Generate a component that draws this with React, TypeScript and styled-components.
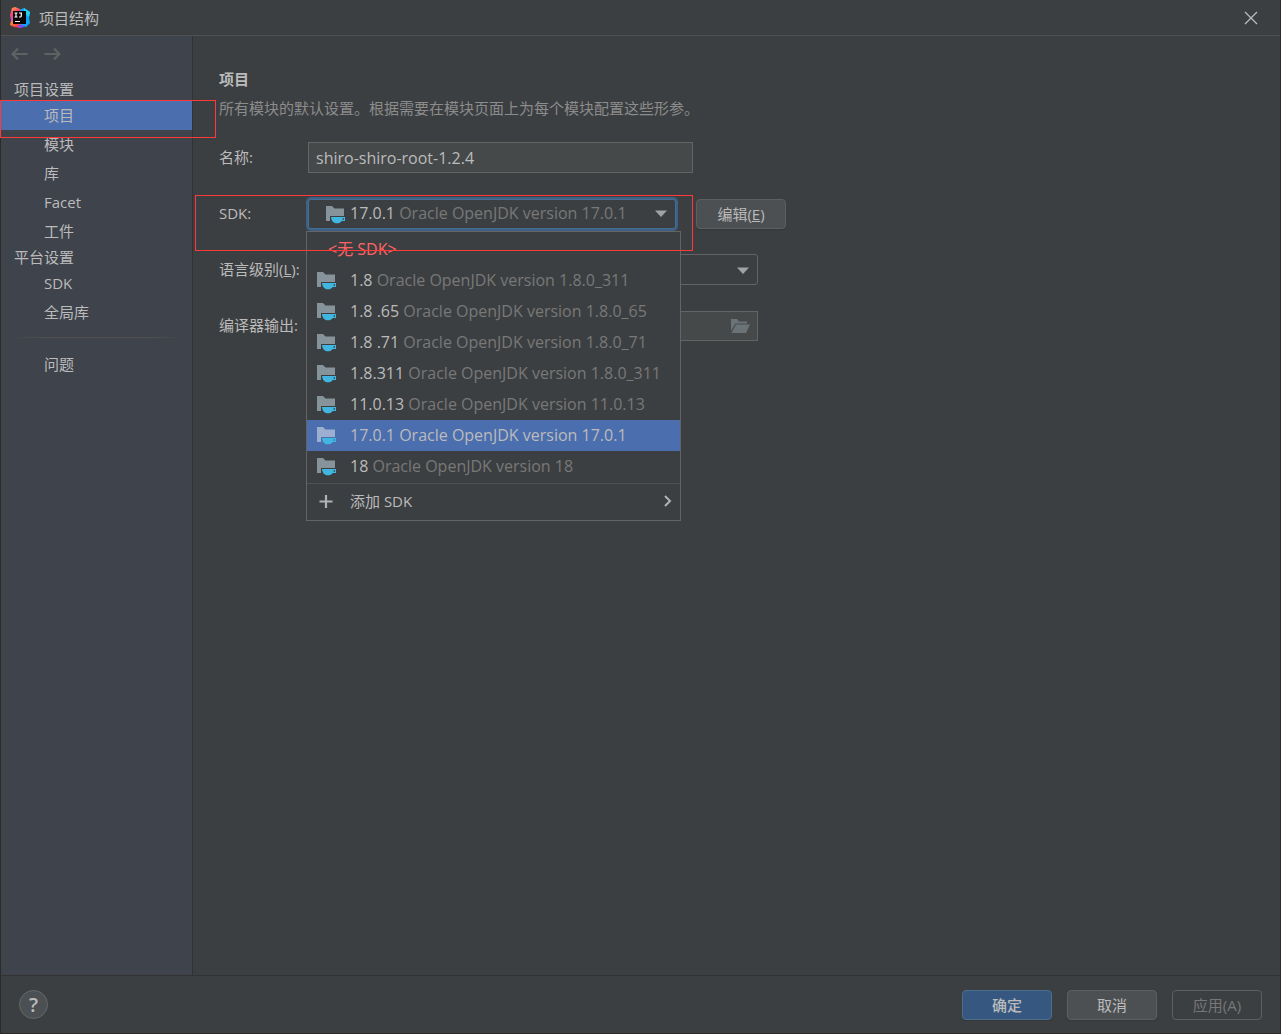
import React, { useState } from "react";
import styled, { createGlobalStyle, css } from "styled-components";

const c = {
  bg: "#3c3f41",
  sidebar: "#3e434c",
  text: "#bbbbbb",
  muted: "#787878",
  hint: "#8c8c8c",
  select: "#4b6eaf",
  field: "#45494a",
  border: "#646464",
  line: "#515151",
  edge: "#323232",
  mark: "#ff3838",
};

const GlobalStyle = createGlobalStyle`
  * { box-sizing: border-box; }
  body { margin: 0; background: ${c.bg}; }
  body, button, input, select {
    font-family: "Open Sans", "Noto Sans CJK SC", sans-serif;
    font-size: 15px;
    line-height: 20px;
    color: ${c.text};
  }
`;

const Window = styled.div`
  display: flex;
  flex-direction: column;
  min-height: 100vh;
  border: solid #2b2b2b;
  border-width: 0 1px 1px;
  background: ${c.bg};
`;

const TitleBar = styled.header`
  display: flex;
  align-items: center;
  gap: 8px;
  height: 36px;
  padding: 0 22px 0 8px;
  border-bottom: 1px solid ${c.line};
`;

const WindowTitle = styled.h1`
  flex: 1;
  margin: 0;
  font-size: 15px;
  font-weight: 400;
`;

const IconButton = styled.button`
  display: flex;
  padding: 0;
  border: 0;
  background: none;
  color: ${c.text};
`;

const Body = styled.div`
  display: flex;
  flex: 1;
`;

const Sidebar = styled.nav`
  width: 192px;
  flex-shrink: 0;
  background: ${c.sidebar};
  border-right: 1px solid ${c.edge};
`;

const History = styled.div`
  display: flex;
  align-items: center;
  gap: 15px;
  height: 36px;
  margin-bottom: 6px;
  padding-left: 9px;
  ${IconButton} { color: #5f6163; }
`;

const GroupTitle = styled.h2`
  margin: 0;
  padding-left: 13px;
  font-size: 15px;
  font-weight: 400;
  line-height: 23px;
`;

const NavList = styled.ul`
  margin: 0;
  padding: 0;
  list-style: none;
`;

const NavItem = styled.li`
  position: relative;
`;

const NavLink = styled.a<{ $active?: boolean }>`
  display: block;
  padding-left: 43px;
  line-height: 29px;
  color: ${c.text};
  text-decoration: none;
  background: ${(p) => (p.$active ? c.select : "transparent")};
`;

const Divider = styled.hr`
  height: 1px;
  margin: 10px 10px 12px;
  border: 0;
  background: linear-gradient(90deg, transparent, ${c.line} 20%, ${c.line} 80%, transparent);
`;

const Mark = styled.span<{ $area: "nav" | "sdk" }>`
  position: absolute;
  z-index: 3;
  border: 1px solid ${c.mark};
  pointer-events: none;
  ${(p) =>
    p.$area === "nav"
      ? css`top: -1px; left: -1px; width: 216px; height: 38px;`
      : css`top: -3px; left: -24px; width: 498px; height: 56px;`}
`;

const Main = styled.main`
  flex: 1;
  padding: 33px 26px;
`;

const PageTitle = styled.h2`
  margin: 0 0 9px;
  font-size: 15px;
  font-weight: 700;
  line-height: 20px;
`;

const Description = styled.p`
  margin: 0 0 24px;
  color: ${c.hint};
`;

const Form = styled.form`
  display: grid;
  gap: 25px;
`;

const Row = styled.div`
  position: relative;
  display: grid;
  grid-template-columns: 89px auto auto;
  justify-content: start;
  align-items: center;
  height: 31px;
`;

const Label = styled.label`
  padding-bottom: 2px;
  white-space: nowrap;
`;

const TextField = styled.input`
  width: 385px;
  height: 31px;
  padding: 0 7px;
  border: 1px solid ${c.border};
  background: ${c.field};
  font-size: 16px;
  outline: 0;
`;

const SelectFrame = styled.div`
  display: flex;
  align-items: center;
  width: 450px;
  height: 31px;
  border: 1px solid ${c.border};
  border-radius: 3px;
  svg { margin: 1px 8px 0 -20px; pointer-events: none; }
`;

const Select = styled.select`
  flex: 1;
  height: 29px;
  padding: 0 28px 0 7px;
  appearance: none;
  border: 0;
  background: none;
  outline: 0;
`;

const PathFrame = styled.div`
  display: flex;
  align-items: center;
  width: 450px;
  height: 30px;
  padding-right: 7px;
  border: 1px solid ${c.border};
  background: ${c.field};
`;

const PathField = styled.input`
  flex: 1;
  min-width: 0;
  padding: 0 7px;
  border: 0;
  background: none;
  outline: 0;
`;

const ComboWrap = styled.div`
  position: relative;
  width: 368px;
`;

const Combo = styled.button`
  display: flex;
  align-items: center;
  gap: 4px;
  width: 100%;
  height: 30px;
  padding: 0 8px 0 17px;
  border: 1px solid #466d94;
  border-radius: 3px;
  background: ${c.bg};
  box-shadow: 0 0 0 2px #3d6185;
  font-size: 16px;
  outline: 0;
`;

const ComboText = styled.span`
  flex: 1;
  padding-bottom: 2px;
  text-align: left;
  white-space: nowrap;
`;

const Version = styled.span<{ $muted: boolean }>`
  color: ${(p) => (p.$muted ? c.muted : "inherit")};
`;

const Popup = styled.div`
  position: absolute;
  z-index: 2;
  top: 32px;
  left: -2px;
  width: 375px;
  border: 1px solid ${c.border};
  background: ${c.bg};
`;

const Options = styled.ul`
  margin: 0;
  padding: 2px 0 1px;
  list-style: none;
  border-bottom: 1px solid ${c.line};
`;

const Option = styled.li<{ $active?: boolean; $none?: boolean }>`
  display: flex;
  align-items: center;
  gap: 13px;
  height: 31px;
  padding: 0 0 1px ${(p) => (p.$none ? 21 : 10)}px;
  font-size: 16px;
  white-space: nowrap;
  color: ${(p) => (p.$none ? "#ff6464" : c.text)};
  background: ${(p) => (p.$active ? c.select : "transparent")};
`;

const AddButton = styled.button`
  display: flex;
  align-items: center;
  gap: 13px;
  width: 100%;
  height: 36px;
  padding: 0 8px 2px 10px;
  border: 0;
  background: none;
  text-align: left;
  span { flex: 1; }
`;

const Button = styled.button<{ $kind?: "primary" }>`
  width: 90px;
  height: 30px;
  padding: 0;
  border: 1px solid ${(p) => (p.$kind ? "#4c708c" : "#5e6060")};
  border-radius: 4px;
  background: ${(p) => (p.$kind ? "#365880" : "#4c5052")};
  box-shadow: 0 1px 1px #35383a;
  font-weight: ${(p) => (p.$kind ? 500 : 400)};
  &:disabled {
    background: none;
    box-shadow: none;
    color: #777777;
  }
`;

const EditButton = styled(Button)`
  margin-left: 20px;
`;

const Footer = styled.footer`
  display: flex;
  align-items: center;
  gap: 15px;
  height: 58px;
  padding: 0 18px;
  border-top: 1px solid ${c.edge};
`;

const HelpButton = styled.button`
  width: 29px;
  height: 29px;
  margin-right: auto;
  padding: 0;
  border: 1px solid #646869;
  border-radius: 50%;
  background: #4c5052;
  font-size: 20px;
  font-weight: 600;
`;

const Logo = () => (
  <svg width="22" height="22" viewBox="0 0 22 22" aria-hidden="true">
    <defs>
      <linearGradient id="warm" x1="0" y1="0" x2="0.3" y2="1">
        <stop offset="0" stopColor="#fdb62f" />
        <stop offset="0.35" stopColor="#ff3d7c" />
        <stop offset="0.6" stopColor="#c757bc" />
        <stop offset="0.75" stopColor="#ff8a1e" />
        <stop offset="1" stopColor="#fe315d" />
      </linearGradient>
    </defs>
    <path d="M10 3l5-2 6 4-1 6 1 5-4 4-8-2z" fill="#08a5fa" />
    <path d="M15 1l6 4-1 5-5-4z" fill="#21d1f0" />
    <path d="M3 1l3-1 5 2 1 4-1 11 3 2-3 2-6-1-4-2 1-5-1-5z" fill="url(#warm)" />
    <path d="M10 21l-1-3h7l-1 2z" fill="#6b57ff" />
    <rect x="4" y="4" width="13" height="13" fill="#090405" />
    <path d="M5.500 6h3M7 6v4M5.500 10h3M10 6h3M12.300 6v3q0 1-1.300 1h-1M6 14.500h5" fill="none" stroke="#fff" strokeWidth="1.200" />
  </svg>
);

const Arrow = ({ back }: { back?: boolean }) => (
  <svg width="18" height="14" viewBox="0 0 18 14" fill="none" stroke="currentColor" strokeWidth="2.200" aria-hidden="true">
    <path d={back ? "M17.500 7H3M8 1.500L2.500 7L8 12.500" : "M1.500 7H16M11 1.500L16.500 7L11 12.500"} />
  </svg>
);

const Caret = () => (
  <svg width="12" height="7" viewBox="0 0 12 7" aria-hidden="true">
    <path d="M0 0.500h12L6 7z" fill="#a0a3a5" />
  </svg>
);

const JdkIcon = ({ active }: { active?: boolean }) => (
  <svg width="20" height="20" viewBox="0 0 20 20" aria-hidden="true">
    <path d="M0 2h6l2.500 2.500H18V12H4v5H0z" fill={active ? "#9dafd0" : "#87939a"} />
    <path d="M5 13h14v4h-3.200c-1.300 1.700-2.600 2.300-4.800 2.300-3.500 0-5.500-2.300-6-6.300zm11.600 1.200v1.600h1.400v-1.600z" fill="#40b6e0" fillRule="evenodd" />
  </svg>
);

const navGroups = [
  { title: "项目设置", items: ["项目", "模块", "库", "Facet", "工件"] },
  { title: "平台设置", items: ["SDK", "全局库"] },
];

const sdks = [
  ["1.8", "1.8.0_311"],
  ["1.8 .65", "1.8.0_65"],
  ["1.8 .71", "1.8.0_71"],
  ["1.8.311", "1.8.0_311"],
  ["11.0.13", "11.0.13"],
  ["17.0.1", "17.0.1"],
  ["18", "18"],
];

export default function App() {
  const [page, setPage] = useState("项目");
  const [open, setOpen] = useState(true);
  const [sdk, setSdk] = useState(5);
  const [name, setName] = useState("shiro-shiro-root-1.2.4");

  return (
    <Window>
      <GlobalStyle />
      <TitleBar>
        <Logo />
        <WindowTitle>项目结构</WindowTitle>
        <IconButton type="button" aria-label="关闭">
          <svg width="14" height="14" viewBox="0 0 14 14" stroke="currentColor" strokeWidth="1.300" aria-hidden="true">
            <path d="M1 1l12 12M13 1L1 13" />
          </svg>
        </IconButton>
      </TitleBar>
      <Body>
        <Sidebar>
          <History>
            <IconButton type="button" aria-label="后退"><Arrow back /></IconButton>
            <IconButton type="button" aria-label="前进"><Arrow /></IconButton>
          </History>
          {navGroups.map((group) => (
            <React.Fragment key={group.title}>
              <GroupTitle>{group.title}</GroupTitle>
              <NavList>
                {group.items.map((item) => (
                  <NavItem key={item}>
                    <NavLink href="#" $active={item === page} onClick={() => setPage(item)}>{item}</NavLink>
                    {item === "项目" && <Mark $area="nav" />}
                  </NavItem>
                ))}
              </NavList>
            </React.Fragment>
          ))}
          <Divider />
          <NavLink href="#" $active={page === "问题"} onClick={() => setPage("问题")}>问题</NavLink>
        </Sidebar>
        <Main>
          <PageTitle>项目</PageTitle>
          <Description>所有模块的默认设置。根据需要在模块页面上为每个模块配置这些形参。</Description>
          <Form onSubmit={(e) => e.preventDefault()}>
            <Row>
              <Label htmlFor="name">名称:</Label>
              <TextField id="name" value={name} onChange={(e) => setName(e.target.value)} />
            </Row>
            <Row>
              <Label htmlFor="sdk">SDK:</Label>
              <ComboWrap>
                <Combo id="sdk" type="button" aria-haspopup="listbox" aria-expanded={open} onClick={() => setOpen(!open)}>
                  <JdkIcon />
                  <ComboText>
                    {sdks[sdk][0]} <Version $muted>Oracle OpenJDK version {sdks[sdk][1]}</Version>
                  </ComboText>
                  <Caret />
                </Combo>
                {open && (
                  <Popup>
                    <Options role="listbox">
                      <Option role="option" $none>&lt;无 SDK&gt;</Option>
                      {sdks.map(([id, version], i) => (
                        <Option key={id} role="option" aria-selected={i === sdk} $active={i === sdk} onClick={() => setSdk(i)}>
                          <JdkIcon active={i === sdk} />
                          <span>
                            {id} <Version $muted={i !== sdk}>Oracle OpenJDK version {version}</Version>
                          </span>
                        </Option>
                      ))}
                    </Options>
                    <AddButton type="button">
                      <svg width="20" height="20" viewBox="0 0 20 20" stroke="#afb1b3" strokeWidth="2.200" aria-hidden="true">
                        <path d="M9 4v13M2.500 10.500h13" />
                      </svg>
                      <span>添加 SDK</span>
                      <svg width="8" height="12" viewBox="0 0 8 12" fill="none" stroke="#afb1b3" strokeWidth="2" aria-hidden="true">
                        <path d="M1 1l5 5-5 5" />
                      </svg>
                    </AddButton>
                  </Popup>
                )}
              </ComboWrap>
              <EditButton type="button">编辑(<u>E</u>)</EditButton>
              <Mark $area="sdk" />
            </Row>
            <Row>
              <Label htmlFor="level">语言级别(<u>L</u>):</Label>
              <SelectFrame>
                <Select id="level"><option /></Select>
                <Caret />
              </SelectFrame>
            </Row>
            <Row>
              <Label htmlFor="output">编译器输出:</Label>
              <PathFrame>
                <PathField id="output" />
                <IconButton type="button" aria-label="浏览">
                  <svg width="19" height="16" viewBox="0 0 19 16" fill="#6b7377" aria-hidden="true">
                    <path d="M0 1h6l2 2.500h8V5.500H4.500L0 13z" />
                    <path d="M5 6.500h14L15 15H0.500z" />
                  </svg>
                </IconButton>
              </PathFrame>
            </Row>
          </Form>
        </Main>
      </Body>
      <Footer>
        <HelpButton type="button" aria-label="帮助">?</HelpButton>
        <Button type="button" $kind="primary">确定</Button>
        <Button type="button">取消</Button>
        <Button type="button" disabled>应用(A)</Button>
      </Footer>
    </Window>
  );
}
